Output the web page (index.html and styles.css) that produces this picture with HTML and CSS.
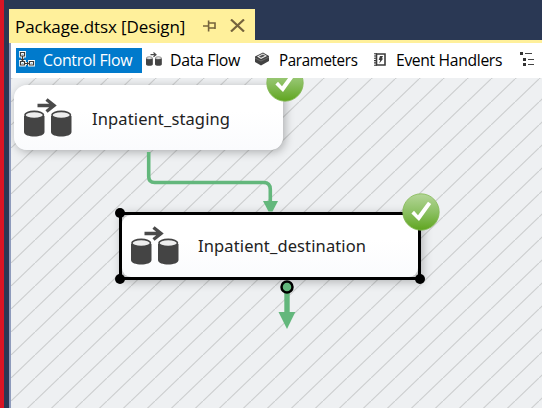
FILE: index.html
```
<!DOCTYPE html>
<html lang="en">
<head>
<meta charset="utf-8">
<title>Package.dtsx [Design]</title>
<link rel="stylesheet" href="styles.css">
</head>
<body>
<svg width="0" height="0" class="defs">
  <defs>
    <linearGradient id="green" x1="0" y1="0" x2="0" y2="1"><stop offset="0" stop-color="#b4d698"/><stop offset=".5" stop-color="#8cc063"/><stop offset="1" stop-color="#5fa51f"/></linearGradient>
    <symbol id="check" viewBox="0 0 38 38">
      <circle cx="19" cy="19" r="18.2" fill="url(#green)" stroke="#85b957" stroke-width=".8"/>
      <path d="M9.4 20.5 L12 17.8 L16 22.2 L26 8.8 L29.2 11 L17 28 Z" fill="#fff"/>
    </symbol>
    <symbol id="flow" viewBox="0 0 48 40">
      <g fill="#444">
        <path d="M0 18V34C0 40 20.5 40 20.5 34V18ZM27 18V34C27 40 47.5 40 47.5 34V18Z"/>
        <ellipse cx="10.2" cy="17" rx="9.3" ry="3.6" fill="#eee" stroke="#444" stroke-width="1.6"/>
        <ellipse cx="37.2" cy="17" rx="9.3" ry="3.6" fill="#eee" stroke="#444" stroke-width="1.6"/>
      </g>
      <path d="M13.5 7.5H30M22.5 1.5L30 7.5L22.5 13.5" fill="none" stroke="#4a4a4a" stroke-width="3.4"/>
    </symbol>
  </defs>
</svg>
<div class="window">
  <header class="titlebar">
    <div class="document-tab">
      <span class="document-name">Package.dtsx [Design]</span>
      <svg class="pin" width="13" height="12" viewBox="0 0 13 12"><path d="M0 6H5M5.6 .5V11.5M5.6 3H12V9M5.6 8H12" fill="none" stroke="#75633d" stroke-width="1.6"/></svg>
      <svg class="close" width="15" height="13" viewBox="0 0 15 13"><path d="M1 .5L14 12.5M14 .5L1 12.5" stroke="#75633d" stroke-width="2.2"/></svg>
    </div>
  </header>
  <main class="editor">
    <nav class="tabs">
      <a class="tab control active"><svg width="16" height="16" viewBox="0 0 16 16"><g fill="none" stroke="#fff" stroke-width="2.8"><path d="M1.5 1.5H5.5V5H1.5ZM1.5 10.5H5.5V14H1.5ZM10.5 10.5H14.5V14H10.5ZM3.5 5V10M6 12.5H10"/></g><g fill="none" stroke="#3c3c3c" stroke-width="1.2"><path d="M1.5 1.5H5.5V5H1.5ZM1.5 10.5H5.5V14H1.5ZM10.5 10.5H14.5V14H10.5ZM3.5 5V10M2 8L3.5 9.5L5 8M6 12.5H10M8.5 11V14"/></g></svg><span>Control Flow</span></a>
      <a class="tab data"><svg width="16" height="15" viewBox="0 0 48 42" preserveAspectRatio="none"><use href="#flow" width="48" height="40"/></svg><span>Data Flow</span></a>
      <a class="tab params"><svg width="16" height="14" viewBox="0 0 16 14"><path d="M1 4.5L9 .5L15 4V9L7 13.5L1 10Z" fill="#424242"/><path d="M3 4.5L9 1.5L13 4L7 7Z" fill="#eee"/><path d="M5 4.4L9 2.4L11 3.8L7 5.8Z" fill="#555"/><path d="M1 6L7 9L15 5" fill="none" stroke="#999" stroke-width=".5"/></svg><span>Parameters</span></a>
      <a class="tab events"><svg width="12" height="13" viewBox="0 0 12 13"><path d="M2.5 1H11V12H2.5Z" fill="#fff" stroke="#3b3b3b" stroke-width="1.6"/><path d="M0 .7H3M0 3H3M0 5.3H3M0 7.6H3M0 9.9H3M0 12.2H3" stroke="#3b3b3b" stroke-width="1.1"/><path d="M6 3H9L7.8 5.5H9.3L5.2 10.5L6.2 7H4.7Z" fill="#3b3b3b"/></svg><span>Event Handlers</span></a>
      <a class="tab explorer"><svg width="14" height="14" viewBox="0 0 14 14"><path d="M0 0H3V3H0ZM3 6H6V9H3ZM3 11H6V14H3Z" fill="#333"/><path d="M5 1.5H12M8 7.5H14M8 12.5H14" stroke="#444" stroke-width="1"/></svg></a>
    </nav>
    <section class="canvas">
      <svg class="hatching" width="100%" height="100%">
        <defs><pattern id="hatch" width="24" height="23" y="1" patternUnits="userSpaceOnUse"><path d="M-1 23.96L25 -.96" stroke="#cdcfd0" stroke-width="1.2"/></pattern></defs>
        <rect width="100%" height="100%" fill="url(#hatch)"/>
      </svg>
      <div class="task source"><svg width="48" height="40"><use href="#flow"/></svg><span>Inpatient_staging</span></div>
      <svg class="badge first" width="38" height="38"><use href="#check"/></svg>
      <div class="task destination"><div class="face"><svg width="48" height="40"><use href="#flow"/></svg><span>Inpatient_destination</span></div>
        <i class="handle top-left"></i><i class="handle bottom-left"></i><i class="handle bottom-right"></i>
      </div>
      <svg class="connectors" width="531" height="330" viewBox="0 0 531 330">
        <path d="M137.7 74V98.5Q137.7 104.5 143.7 104.5H252.5Q259.3 104.5 259.3 111.5V124" fill="none" stroke="#63b77c" stroke-width="3.6"/>
        <path d="M252 123H267L261.5 133.5H257.5Z" fill="#63b77c"/>
        <path d="M276 214V234" stroke="#63b77c" stroke-width="5.4"/>
        <path d="M267.5 234H284.3L276 251Z" fill="#63b77c"/>
        <circle cx="276" cy="209" r="5.5" fill="#63b77c" stroke="#000" stroke-width="2.5"/>
      </svg>
      <svg class="badge second" width="38" height="38"><use href="#check"/></svg>
    </section>
  </main>
</div>
</body>
</html>
```
FILE: styles.css
```
* { box-sizing: border-box; }
body { margin: 0; overflow: hidden; }
svg { display: block; flex: none; }
.defs { position: absolute; }
.window {
  display: flex;
  flex-direction: column;
  width: 542px;
  height: 408px;
  padding: 9px 0 0 5px;
  border-left: 4px solid #d91524;
  background: #2a3854;
  font: 16.5px "Open Sans", sans-serif;
  color: #000;
}
.titlebar { height: 31px; }
.document-tab {
  display: flex;
  align-items: center;
  width: 246px;
  height: 31px;
  padding: 4px 9px 0 6px;
  background: #fff09b;
}
.document-name { width: 171px; white-space: nowrap; font-size: 17px; letter-spacing: -.1px; }
.pin { margin: -1px 0 0 17px; }
.close { margin: -3px 0 0 14px; }
.editor {
  flex: 1;
  display: flex;
  flex-direction: column;
  border-top: 3px solid #fff09b;
}
.tabs {
  display: flex;
  align-items: center;
  height: 35px;
  padding-left: 5px;
  border-left: 2px solid #8e9bbc;
  background: #fff;
}
.tab { display: flex; align-items: center; height: 25px; white-space: nowrap; letter-spacing: -.35px; }
.tab svg { margin-top: -3px; }
.tab span { margin-top: -3px; transform: scaleX(.963); transform-origin: left; }
.control { width: 126px; padding-left: 3px; gap: 8px; }
.active { background: #007acc; color: #fff; }
.data { width: 108px; margin-left: 4px; gap: 8px; }
.params { width: 120px; gap: 9px; }
.tab.params span { transform: scaleX(.915); }
.events { width: 146px; gap: 10px; }
.tab.events span { transform: scaleX(.95); }
.canvas {
  position: relative;
  flex: 1;
  overflow: hidden;
  border-left: 2px solid #8e9bbc;
  background: #eef0f2;
}
.hatching { position: absolute; inset: 0; }
.task {
  position: absolute;
  display: flex;
  align-items: center;
  background: linear-gradient(#fff 40%, #fafbfd);
  font: 16.5px "Noto Sans", sans-serif;
  letter-spacing: .12px;
  color: #222;
}
.source {
  left: 3px;
  top: 7px;
  width: 269px;
  height: 65px;
  padding-left: 10px;
  gap: 20px;
  border-radius: 13px;
  box-shadow: 2px 2px 10px rgba(0, 0, 0, .28);
}
.destination {
  left: 108px;
  top: 134px;
  width: 302px;
  height: 68px;
  border: 3px solid #000;
  border-radius: 3px;
  background: #c9cacb;
  box-shadow: 2px 2px 10px rgba(0, 0, 0, .25);
}
.face {
  display: flex;
  flex: 1;
  align-items: center;
  align-self: stretch;
  padding-left: 9px;
  gap: 19px;
  border-radius: 9px;
  background: linear-gradient(#fff 40%, #fafbfd);
}
.task span { margin-top: 1px; }
.face span { margin-top: -1px; }
.connectors, .badge { position: absolute; }
.connectors { left: 0; top: 0; }
.first { left: 255px; top: -14px; }
.second { left: 391px; top: 115px; }
.handle { position: absolute; width: 10px; height: 10px; border-radius: 50%; background: #000; }
.top-left { left: -7px; top: -7px; }
.bottom-left { left: -7px; bottom: -7px; }
.bottom-right { right: -7px; bottom: -7px; }
```
